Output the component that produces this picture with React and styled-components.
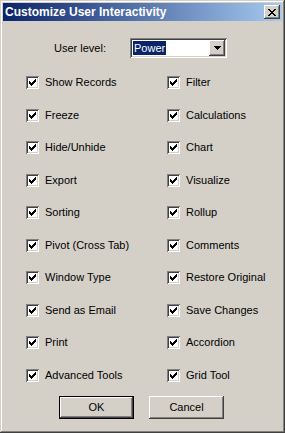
import React from "react";
import styled, { createGlobalStyle } from "styled-components";

const Global = createGlobalStyle`
  html, body { margin: 0; padding: 0; background: #d4d0c8; }
  body { font-family: "Liberation Sans", Arial, sans-serif; font-size: 11px; color: #000; }
  * { box-sizing: border-box; }
`;

const Window = styled.div`
  width: 285px;
  height: 433px;
  background: #d4d0c8;
  padding: 3px;
  box-shadow: inset -1px -1px #404040, inset 1px 1px #d4d0c8,
    inset -2px -2px #808080, inset 2px 2px #ffffff;
  display: flex;
  flex-direction: column;
`;

const TitleBar = styled.div`
  height: 18px;
  flex: none;
  background: linear-gradient(to right, #0a246a, #a6caf0);
  display: flex;
  align-items: center;
  justify-content: space-between;
  padding: 0 2px 0 2px;
`;

const Title = styled.span`
  color: #fff;
  font-weight: bold;
  font-size: 12px;
  line-height: 18px;
  white-space: nowrap;
`;

const Raised = styled.div`
  background: #d4d0c8;
  box-shadow: inset -1px -1px #404040, inset 1px 1px #ffffff,
    inset -2px -2px #808080, inset 2px 2px #d4d0c8;
`;

const CloseButton = styled(Raised)`
  width: 16px;
  height: 14px;
  display: flex;
  align-items: center;
  justify-content: center;
`;

const Content = styled.div`
  display: flex;
  flex-direction: column;
`;

const LevelRow = styled.div`
  display: flex;
  align-items: center;
  margin-top: 17px;
  padding-left: 51px;
  height: 20px;
`;

const Label = styled.span`
  width: 76px;
  line-height: 13px;
  white-space: nowrap;
`;

const Combo = styled.div`
  width: 97px;
  height: 20px;
  background: #fff;
  box-shadow: inset 1px 1px #808080, inset -1px -1px #ffffff,
    inset 2px 2px #404040, inset -2px -2px #d4d0c8;
  padding: 2px;
  display: flex;
  align-items: stretch;
`;

const ComboText = styled.div`
  flex: 1;
  display: flex;
  align-items: center;
  padding-left: 1px;
`;

const Selected = styled.span`
  background: #0a246a;
  color: #fff;
  line-height: 14px;
  padding: 0 1px 0 1px;
`;

const DropButton = styled(Raised)`
  width: 16px;
  display: flex;
  align-items: center;
  justify-content: center;
`;

const Grid = styled.div`
  display: grid;
  grid-template-columns: 141px 1fr;
  grid-template-rows: repeat(10, 13px);
  grid-auto-flow: column;
  row-gap: 19.5px;
  margin-top: 18px;
  padding-left: 23px;
`;

const Item = styled.label`
  display: flex;
  align-items: center;
  gap: 6px;
  height: 13px;
  white-space: nowrap;
  line-height: 13px;
`;

const Box = styled.span`
  width: 13px;
  height: 13px;
  flex: none;
  background: #fff;
  box-shadow: inset 1px 1px #808080, inset -1px -1px #ffffff,
    inset 2px 2px #404040, inset -2px -2px #d4d0c8;
  display: flex;
  align-items: flex-start;
  justify-content: flex-start;
  padding: 3px;
`;

const Buttons = styled.div`
  display: flex;
  gap: 15px;
  margin-top: 14.5px;
  padding-left: 56px;
`;

const Button = styled(Raised)`
  width: 75px;
  height: 23px;
  display: flex;
  align-items: center;
  justify-content: center;
  line-height: 13px;
  ${(p) =>
    p.$default &&
    `
    box-shadow: inset 0 0 0 1px #000, inset -2px -2px #404040, inset 2px 2px #ffffff,
      inset -3px -3px #808080, inset 3px 3px #d4d0c8;
  `}
`;

const checkPixels = [
  "......X",
  ".....XX",
  "X...XXX",
  "XX.XXX.",
  "XXXXX..",
  ".XXX...",
  "..X....",
];

const Check = () => (
  <svg width="7" height="7" viewBox="0 0 7 7" shapeRendering="crispEdges">
    {checkPixels.flatMap((row, y) =>
      row.split("").map((c, x) =>
        c === "X" ? <rect key={`${x}-${y}`} x={x} y={y} width="1" height="1" fill="#000" /> : null
      )
    )}
  </svg>
);

const Arrow = () => (
  <svg width="7" height="4" viewBox="0 0 7 4" shapeRendering="crispEdges">
    <rect x="0" y="0" width="7" height="1" fill="#000" />
    <rect x="1" y="1" width="5" height="1" fill="#000" />
    <rect x="2" y="2" width="3" height="1" fill="#000" />
    <rect x="3" y="3" width="1" height="1" fill="#000" />
  </svg>
);

const CloseX = () => (
  <svg width="8" height="7" viewBox="0 0 8 7" shapeRendering="crispEdges">
    {[
      "XX....XX",
      ".XX..XX.",
      "..XXXX..",
      "...XX...",
      "..XXXX..",
      ".XX..XX.",
      "XX....XX",
    ].flatMap((row, y) =>
      row.split("").map((c, x) =>
        c === "X" ? <rect key={`${x}-${y}`} x={x} y={y} width="1" height="1" fill="#000" /> : null
      )
    )}
  </svg>
);

const left = [
  "Show Records",
  "Freeze",
  "Hide/Unhide",
  "Export",
  "Sorting",
  "Pivot (Cross Tab)",
  "Window Type",
  "Send as Email",
  "Print",
  "Advanced Tools",
];
const right = [
  "Filter",
  "Calculations",
  "Chart",
  "Visualize",
  "Rollup",
  "Comments",
  "Restore Original",
  "Save Changes",
  "Accordion",
  "Grid Tool",
];

export default function App() {
  return (
    <>
      <Global />
      <Window>
        <TitleBar>
          <Title>Customize User Interactivity</Title>
          <CloseButton>
            <CloseX />
          </CloseButton>
        </TitleBar>
        <Content>
          <LevelRow>
            <Label>User level:</Label>
            <Combo>
              <ComboText>
                <Selected>Power</Selected>
              </ComboText>
              <DropButton>
                <Arrow />
              </DropButton>
            </Combo>
          </LevelRow>
          <Grid>
            {[...left, ...right].map((t) => (
              <Item key={t}>
                <Box>
                  <Check />
                </Box>
                {t}
              </Item>
            ))}
          </Grid>
          <Buttons>
            <Button $default>OK</Button>
            <Button>Cancel</Button>
          </Buttons>
        </Content>
      </Window>
    </>
  );
}
